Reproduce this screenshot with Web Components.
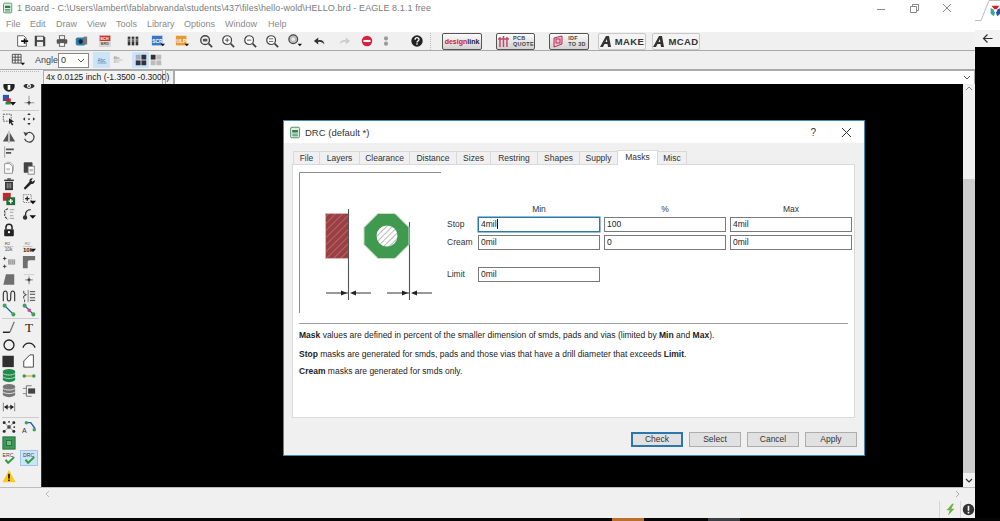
<!DOCTYPE html>
<html><head><meta charset="utf-8"><title>EAGLE DRC</title>
<style>
html,body{margin:0;height:521px;overflow:hidden;background:#000;font-family:"Liberation Sans",Arial,sans-serif}
</style></head><body>
<eagle-app></eagle-app>
<template id="none"></template>
<script>
const T=(x,y,s,t,f='#333',w=400)=>`<text x="${x}" y="${y}" font-size="${s}" fill="${f}" font-weight="${w}" font-family="Liberation Sans,sans-serif">${t}</text>`;
const DROP=`<path d="M11 11h5l-2.5 3z" fill="#111"/>`;
const ICONS={
open:`<path d="M3 2h7l3 3v9H3z" fill="#fff" stroke="#555"/><path d="M7 8h8M11 5v6" stroke="#111" stroke-width="2"/>`,
save:`<path d="M2 2h10l2 2v10H2z" fill="#444"/><rect x="4.500" y="3" width="7" height="4" fill="#eee"/><rect x="4.500" y="9" width="7" height="5" fill="#eee"/>`,
print:`<rect x="5" y="2" width="6" height="4" fill="#fff" stroke="#555"/><rect x="2" y="6" width="12" height="5" rx="1" fill="#555"/><rect x="5" y="10" width="6" height="4" fill="#fff" stroke="#555"/>`,
cam:`<rect x="2" y="4" width="11" height="9" rx="2" fill="#2c7ea8"/><circle cx="7.500" cy="8.500" r="2.500" fill="#123"/><rect x="11" y="3" width="4" height="9" fill="#777"/>`,
sch:`<rect x="2" y="1.500" width="12" height="13" fill="#dcdcdc" stroke="#bbb" stroke-width=".5"/><rect x="2" y="2" width="12" height="6" fill="#c33"/>${T(2.500,7,4.500,'SCH','#fff',700)}${T(3,13,4.500,'BRD','#555',700)}`,
libs:`<g fill="#333"><rect x="2" y="3" width="3" height="10"/><rect x="6.500" y="3" width="3" height="10"/><rect x="11" y="3" width="3" height="10"/></g><path d="M2 6h12M2 8h12" stroke="#ddd" stroke-width=".7"/>`,
scr:`<rect x="1" y="2" width="12" height="11" fill="#3a78c4"/>${T(1.500,10,5.500,'SCR','#fff',700)}${DROP}`,
ulp:`<rect x="1" y="2" width="12" height="11" fill="#ea9a2c"/>${T(1.800,10,5.500,'ULP','#fff',700)}${DROP}`,
zf:`<circle cx="7" cy="7" r="5" fill="#eee" stroke="#444" stroke-width="1.600"/><path d="M11 11l4 4" stroke="#444" stroke-width="2"/><rect x="4.500" y="5.500" width="5" height="3" fill="#555"/>`,
zp:`<circle cx="7" cy="7" r="5" fill="#fff" stroke="#444" stroke-width="1.400"/><path d="M11 11l4 4" stroke="#444" stroke-width="2"/><path d="M4.500 7h5M7 4.500v5" stroke="#444"/>`,
zm:`<circle cx="7" cy="7" r="5" fill="#fff" stroke="#444" stroke-width="1.400"/><path d="M11 11l4 4" stroke="#444" stroke-width="2"/><path d="M4.500 7h5" stroke="#444"/>`,
zs:`<circle cx="7" cy="7" r="5" fill="#fff" stroke="#444" stroke-width="1.400"/><path d="M11 11l4 4" stroke="#444" stroke-width="2"/><path d="M4.500 5.500h5M4.500 8.500h5" stroke="#555"/>`,
zl:`<circle cx="6" cy="6" r="5" fill="#bbb" stroke="#444" stroke-width="1.400"/><circle cx="6" cy="6" r="2" fill="#eee"/>${DROP}`,
undo:`<path d="M13 12c0-4-3-6-7-5V4L1 8l5 4V9c3-.5 5 .5 7 3z" fill="#333"/>`,
redo:`<path d="M3 12c0-4 3-6 7-5V4l5 4-5 4V9c-3-.5-5 .5-7 3z" fill="#ccc"/>`,
stop:`<circle cx="8" cy="8" r="6" fill="#d8203a"/><rect x="4" y="6.800" width="8" height="2.400" fill="#fff"/>`,
dots:`<circle cx="8" cy="5" r="2.300" fill="#999"/><circle cx="8" cy="11" r="2.300" fill="#999"/>`,
help:`<circle cx="8" cy="8" r="6.500" fill="#222"/><path d="M5.800 6.500c0-3 4.500-3 4.500-.2 0 1.700-2.300 1.700-2.300 3.300" fill="none" stroke="#fff" stroke-width="1.500"/><rect x="7.200" y="10.600" width="1.600" height="1.600" fill="#fff"/>`,
grid:`<path d="M1.500 1.500h10v10h-10zM1.500 4.800h10M1.500 8.100h10M4.800 1.500v10M8.100 1.500v10" fill="none" stroke="#444"/>${DROP}`,
abc:`${T(2,10,6,'Abc','#37a','400')}<path d="M2 12h12" stroke="#68a"/>`,
mirrorT:`<path d="M2 8h12" stroke="#999" stroke-width=".7"/>${T(2,7,5,'Abc','#888')}${T(2,12.500,5,'Abc','#bbb')}`,
gridA:`<g fill="#778"><rect x="2" y="2" width="5.500" height="5.500" fill="#aab"/><rect x="8.500" y="2" width="5.500" height="5.500" fill="#333"/><rect x="2" y="8.500" width="5.500" height="5.500" fill="#334"/><rect x="8.500" y="8.500" width="5.500" height="5.500" fill="#333"/></g>`,
gridB:`<rect x="2" y="2" width="5.500" height="5.500" fill="#333"/><rect x="8.500" y="2" width="5.500" height="5.500" fill="#bbb"/><rect x="2" y="8.500" width="5.500" height="5.500" fill="#bbb"/><rect x="8.500" y="8.500" width="5.500" height="5.500" fill="#bbb"/>`,
info:`<circle cx="8" cy="8" r="6.500" fill="#222"/><rect x="7" y="3.500" width="2" height="2" fill="#fff"/><rect x="6.500" y="6.800" width="3" height="5.500" fill="#fff"/>`,
eye:`<path d="M1.500 8C4 4 12 4 14.500 8 12 12 4 12 1.500 8z" fill="#333"/><circle cx="8" cy="8" r="2.300" fill="#fff"/><circle cx="8" cy="8" r="1" fill="#333"/>`,
layers:`<rect x="1" y="1" width="7" height="7" fill="#2a56b0"/><rect x="5" y="5" width="5" height="5" fill="#c22"/><rect x="4" y="9" width="6" height="3" fill="#285"/><path d="M9 9h7l-3.500 4z" fill="#111"/>`,
mark:`<path d="M8 2v11M3 10h11" stroke="#888"/><path d="M6 10h4M8 8v4" stroke="#222"/>`,
select:`<rect x="1.500" y="2.500" width="9" height="8" fill="none" stroke="#555" stroke-dasharray="2 1"/><path d="M8 7l6 4-3 .5 2 3-1.500.8-2-3-1.500 2z" fill="#222"/>`,
move:`<g fill="#333"><path d="M8 1l2 2.500H6zM8 15l2-2.500H6zM1 8l2.500-2v4zM15 8l-2.500-2v4z"/><circle cx="8" cy="8" r="1"/></g>`,
mirror:`<path d="M7 3v10L1 13zM9 3v10h6z" fill="#555"/><path d="M8 1v14" stroke="#999"/>`,
rotate:`<path d="M3.500 5.500A5.500 5.500 0 1 1 3 10" fill="none" stroke="#444" stroke-width="1.400"/><path d="M1.500 2l2.500 5 3-3z" fill="#444"/>`,
align:`<path d="M3 1.500v13" stroke="#999"/><rect x="4.500" y="4" width="9" height="2" fill="#555"/><rect x="4.500" y="8" width="6" height="2" fill="#555"/>`,
copy:`<path d="M3 3h6l3 3v8H3z" fill="#fff" stroke="#888"/><path d="M5 1.500h5l3 3v7" fill="none" stroke="#aaa"/><rect x="5" y="8" width="4" height="3" fill="#ccc"/>`,
paste:`<rect x="2" y="1.500" width="10" height="12" rx="1" fill="#444"/><rect x="7" y="6" width="7" height="9" fill="#fff" stroke="#777"/><rect x="8.500" y="9" width="4" height="3" fill="#bbb"/>`,
trash:`<rect x="2.500" y="3" width="11" height="1.600" fill="#333"/><rect x="6" y="1.500" width="4" height="1.500" fill="#333"/><path d="M3.500 5.500h9V15h-9z" fill="#333"/><path d="M6 7v6M8 7v6M10 7v6" stroke="#ccc" stroke-width=".8"/>`,
wrench:`<path d="M14.500 3.500l-2.500 2-1.500-1.500 2-2.500C10 .8 8 2.500 8.500 5.500L2 12.500 3.500 14.500l7-6.500c3 .5 4.500-2 4-4.500z" fill="#222"/>`,
change:`<rect x="1" y="1" width="9" height="9" fill="#c1272d"/><rect x="5" y="6" width="10" height="9" fill="#25693c"/><path d="M10 8v5M7.500 10.500h5" stroke="#fff" stroke-width="1.500"/>`,
group:`<rect x="1.500" y="3" width="9" height="9" fill="none" stroke="#777" stroke-dasharray="1.500 1"/><path d="M6 5v5M3.500 7.500h5" stroke="#222" stroke-width="1.500"/><path d="M9 10h7l-3.500 4z" fill="#111"/>`,
split:`<path d="M7 2C3 3 2 5 4 7c-2 2-1 5 3 7" fill="none" stroke="#333" stroke-width="1.200" stroke-dasharray="3 1"/><path d="M9 3h5M9 6h4M9 10h4M9 13h5" stroke="#999"/>`,
miterdrop:`<path d="M4 14V9c0-3 2-6 6-6" fill="none" stroke="#333" stroke-width="1.600"/><circle cx="3.500" cy="12" r="2.500" fill="#333"/><path d="M8.500 9.500h7.500l-3.700 4z" fill="#111"/>`,
lock:`<path d="M4.500 7V5a3.500 3.500 0 0 1 7 0v2" fill="none" stroke="#222" stroke-width="1.700"/><rect x="2.500" y="7" width="11" height="8" rx="1" fill="#222"/><circle cx="8" cy="10.500" r="1.300" fill="#fff"/>`,
r10:`${T(3,6,5,'R2','#555')}<path d="M2 7.500h11" stroke="#999" stroke-width=".6"/>${T(3,13,5.500,'10k','#555')}`,
r10d:`${T(3,6,5,'R2','#888')}<path d="M1 7.500h11" stroke="#999" stroke-width=".6"/>${T(1,14,7,'10k','#222',700)}<path d="M10 10h6l-3 3.500z" fill="#111"/>`,
smash:`<path d="M3 2v4M1 4h4M3 11v4M1 13h4" stroke="#333"/><rect x="7" y="5" width="8" height="6" fill="#999"/><path d="M9 5v6M11 5v6M13 5v6" stroke="#ddd" stroke-width=".6"/>`,
miter:`<path d="M1 15V1h14v5H9c-1.500 0-2.500 1-2.500 2.500V15z" fill="#6f6f6f"/>`,
poly2:`<path d="M1.500 14.500l3-12h9.500v12z" fill="#6f6f6f"/>`,
pin:`<path d="M8 5v9M3.500 9h9" stroke="#777"/><path d="M6 9h4M8 7v4" stroke="#222"/><path d="M2 3h12" stroke="#ccc"/>`,
meander:`<path d="M1.500 14V6c0-5 4.500-5 4.500 0v4c0 5 4 5 4 0V6c0-5 4.500-5 4.500 0v8" fill="none" stroke="#333" stroke-width="1.300"/>`,
spread:`<path d="M2 2v3l3 1.500L2 8v3M3 12v3" fill="none" stroke="#333"/><path d="M9 3h6M9 6h6M9 10h6M9 13h6" stroke="#333"/><path d="M7 1v14" stroke="#777"/>`,
route:`<path d="M3 3l10 10" stroke="#1e62a8" stroke-width="1.600"/><circle cx="3" cy="3" r="2.300" fill="#41a05c"/><circle cx="13" cy="13" r="2.300" fill="#41a05c"/>`,
route2:`<path d="M3 3l10 10" stroke="#1e62a8" stroke-width="1.600"/><circle cx="3" cy="3" r="2.300" fill="#41a05c"/><circle cx="13" cy="13" r="2.300" fill="#41a05c"/><rect x="6.500" y="6.500" width="3.500" height="3.500" fill="#d33c8a"/>`,
line:`<path d="M1 14h8" stroke="#111" stroke-width="1.500"/><path d="M9 14l5-12" stroke="#777" stroke-width="1.500"/>`,
text:`<text x="8" y="14" font-size="15" fill="#222" text-anchor="middle" font-family="Liberation Serif,serif">T</text>`,
circle:`<circle cx="8" cy="8" r="5.700" fill="none" stroke="#222" stroke-width="1.500"/>`,
arc:`<path d="M1 11C4 4 12 4 15 11" fill="none" stroke="#222" stroke-width="1.500"/>`,
rect:`<rect x="0.500" y="2" width="13" height="13" fill="#2f2f2f"/>`,
poly:`<path d="M2 15V8l7-7h4v14z" fill="#fff" stroke="#333"/>`,
gstack:`<g fill="#228a4a"><ellipse cx="8" cy="12" rx="7" ry="3"/><rect x="1" y="3" width="14" height="9"/><ellipse cx="8" cy="3" rx="7" ry="3"/></g><path d="M1 5c3 2.500 11 2.500 14 0M1 9c3 2.500 11 2.500 14 0" fill="none" stroke="#bfe6cb" stroke-width="1"/>`,
air:`<path d="M2 8h12" stroke="#d4b11f" stroke-width="1.400"/><circle cx="2.500" cy="8" r="2" fill="#3c9a54"/><circle cx="13.500" cy="8" r="2" fill="#3c9a54"/>`,
stack:`<g fill="#777"><ellipse cx="8" cy="12" rx="7" ry="3"/><rect x="1" y="3" width="14" height="9"/><ellipse cx="8" cy="3" rx="7" ry="3"/></g><path d="M1 5c3 2.500 11 2.500 14 0M1 9c3 2.500 11 2.500 14 0" fill="none" stroke="#eee" stroke-width="1"/>`,
part:`<path d="M5 2v12M5 2h6M5 14h6" stroke="#666" fill="none"/><path d="M1 5h4M1 11h4" stroke="#777"/><rect x="7" y="5" width="8" height="6" fill="#444"/>`,
dim:`<path d="M1.500 3v10M14.500 3v10" stroke="#777"/><path d="M3 8h10" stroke="#222"/><path d="M2.500 8l4-3v6zM13.500 8l-4-3v6z" fill="#222"/>`,
rats:`<g fill="#222"><circle cx="8" cy="8" r="2"/><circle cx="2.500" cy="3" r="1.700"/><circle cx="13.500" cy="3" r="1.700"/><circle cx="2.500" cy="13" r="1.700"/><circle cx="13.500" cy="13" r="1.700"/><circle cx="8" cy="2" r="1"/><circle cx="14" cy="8" r="1"/></g><path d="M2.500 3L13.500 13M13.500 3L2.500 13" stroke="#666" stroke-width=".7"/>`,
auto:`${T(0,15,8,'A','#333')}<path d="M6 3l4 0 5 7" fill="none" stroke="#1e62a8" stroke-width="1.600"/><circle cx="5" cy="3" r="2" fill="#41a05c"/><circle cx="14" cy="11" r="2" fill="#41a05c"/>`,
board:`<rect x="1" y="1" width="14" height="14" fill="#3c9a54" stroke="#1f6b38"/><rect x="5" y="5" width="6" height="6" fill="#7cb98f" stroke="#1f6b38"/>`,
erc:`${T(.5,6.500,6,'ERC','#444')}<path d="M4 10l3 3.500L14 7" fill="none" stroke="#2e9a45" stroke-width="2.200"/>`,
drc:`${T(1,6.500,6,'DRC','#444')}<path d="M4 10l3 3.500L14 7" fill="none" stroke="#2e9a45" stroke-width="2.200"/>`,
warn:`<path d="M8 1L15.500 15H.5z" fill="#fbc81c"/><rect x="7" y="5.500" width="2" height="5.500" fill="#222"/><rect x="7" y="12" width="2" height="1.800" fill="#222"/>`,
bolt:`<path d="M10 1L3 9h4l-2 6 8-8H9l3-6z" fill="#6cb33f"/>`,
alert:`<circle cx="8" cy="8" r="7" fill="#333"/><rect x="7" y="3.500" width="2" height="6" fill="#fff"/><rect x="7" y="10.800" width="2" height="2" fill="#fff"/>`,
appicon:`<rect x="2" y="1.500" width="11" height="13" rx="1.500" fill="#dfeee3" stroke="#2f7d4a"/><rect x="4" y="5" width="7" height="3" fill="#2f7d4a"/><path d="M4 10h7M4 12h7" stroke="#2f7d4a"/>`,
fav:`<circle cx="8" cy="8" r="7" fill="#fff"/><path d="M8 8L3 2h10z" fill="#c22"/><path d="M8 8L2 5v7l4 3z" fill="#3a9"/><path d="M8 8l6-3v7l-4 3z" fill="#25a"/><circle cx="8" cy="8" r="2" fill="#fff"/>`
};
class EIcon extends HTMLElement{
  connectedCallback(){
    const s=+(this.getAttribute('size')||14);
    const r=this.attachShadow({mode:'open'});
    r.innerHTML=`<style>:host{display:inline-flex;width:${s}px;height:${s}px;flex:none}svg{display:block}</style><svg width="${s}" height="${s}" viewBox="0 0 16 16">${ICONS[this.getAttribute('name')]||''}</svg>`;
  }
}
customElements.define('e-icon',EIcon);

class TitleBar extends HTMLElement{
  constructor(){super();this.attachShadow({mode:'open'}).innerHTML=`<style>
  :host{display:flex;align-items:center;height:16px;background:#fff;color:#7b7b7b;font-size:9px;padding-left:2px;white-space:nowrap}
  span{margin-left:3px;letter-spacing:.01em}
  .c{margin-left:auto;display:flex;padding-right:11px;gap:0}
  .c svg{display:block;width:33px;height:12px}
  </style><e-icon name="appicon" size="12"></e-icon><span>1 Board - C:\\Users\\lambert\\fablabrwanda\\students\\437\\files\\hello-wold\\HELLO.brd - EAGLE 8.1.1 free</span>
  <div class="c">
  <svg viewBox="0 0 33 12"><path d="M12 7.500h8" stroke="#888"/></svg>
  <svg viewBox="0 0 33 12"><path d="M12.500 4.500h6v6h-6zM14.500 4.500v-2h6v6h-2" fill="none" stroke="#888"/></svg>
  <svg viewBox="0 0 33 12"><path d="M12 2l8 8M20 2l-8 8" stroke="#888"/></svg>
  </div>`}
}
customElements.define('title-bar',TitleBar);

class MenuBar extends HTMLElement{
  constructor(){super();const items=[['File',6],['Edit',30],['Draw',56],['View',87],['Tools',116],['Library',147],['Options',184],['Window',225],['Help',268]];
  this.attachShadow({mode:'open'}).innerHTML=`<style>:host{display:flex;height:16px;align-items:center;background:#fff;color:#8a8a8a;font-size:9px;padding-bottom:0}
  span{display:block;flex:none}</style>`+items.map((m,i)=>`<span style="width:${(items[i+1]?items[i+1][1]:330)-m[1]}px;${i==0?'margin-left:6px':''}">${m[0]}</span>`).join('')}
}
customElements.define('menu-bar',MenuBar);

/* toolbar: [centerX, icon] list is turned into flow with margins */
class MainTool extends HTMLElement{
  constructor(){super();
  const list=[[22,'open'],[40,'save'],[62,'print'],[81,'cam'],[105,'sch'],[133,'libs'],[158,'scr'],[182,'ulp'],[206,'zf'],[228,'zp'],[250,'zm'],[272,'zs'],[295,'zl'],[320,'undo'],[344,'redo'],[367,'stop'],[386,'dots'],[417,'help']];
  let html='',x=0;
  for(const[c,n]of list){const l=c-7-x;html+=`<e-icon name="${n}" style="margin-left:${l}px"></e-icon>`;x=c+7;}
  const seps=[];
  this.attachShadow({mode:'open'}).innerHTML=`<style>
  :host{display:flex;align-items:center;height:19px;background:#f0f0f0;border-bottom:1px solid #a9a9a9;font-size:7px;position:relative}
  .sep{height:17px;border-left:1px dotted #bbb;margin-left:5px}
  .b{box-sizing:border-box;height:17px;display:flex;align-items:center;justify-content:center;flex:none;border:1px solid #555;border-radius:2px;background:linear-gradient(#fafafa,#d2d2d2);color:#333;gap:3px}
  .t{display:block;line-height:6.500px;font-size:5.500px;font-weight:700;letter-spacing:.3px;color:#444}
  .m{border:1px solid #c8c8c8;background:#f4f4f4;font-size:9.500px;font-weight:700;color:#333;letter-spacing:.4px;height:17px;gap:4px}
  .dl{color:#c22;font-size:7px;font-weight:700}
  .dl i{font-style:normal;color:#222}
  </style>${html}
  <div class="sep" style="margin-left:6px"></div>
  <div class="b" style="width:40px;margin-left:11px"><span class="dl">design<i>link</i></span></div>
  <div class="b" style="width:39px;margin-left:14px"><svg width="13" height="13" viewBox="0 0 13 13"><path d="M1 4h11M3 2v10M6.500 1v11M10 2v10" stroke="#c2476c" stroke-width="1.500" fill="none"/></svg><span class="t">PCB<br>QUOTE</span></div>
  <div class="b" style="width:40px;margin-left:14px"><svg width="13" height="13" viewBox="0 0 13 13"><path d="M2 3l8-2v8l-8 3z" fill="#f4c6d2" stroke="#b03058"/><rect x="4" y="4" width="4" height="4" fill="none" stroke="#b03058"/></svg><span class="t">IDF<br>TO 3D</span></div>
  <div class="b m" style="width:48px;margin-left:9px"><svg width="11" height="11" viewBox="0 0 11 11"><path d="M0 11L6 0h3l2 11H8L7.500 8H4.500L3 11zM5.500 6H7.300L6.800 3z" fill="#333"/></svg>MAKE</div>
  <div class="b m" style="width:48px;margin-left:6px"><svg width="11" height="11" viewBox="0 0 11 11"><path d="M0 11L6 0h3l2 11H8L7.500 8H4.500L3 11zM5.500 6H7.300L6.800 3z" fill="#333"/></svg>MCAD</div>`}
}
customElements.define('main-tool',MainTool);

class ParamTool extends HTMLElement{
  constructor(){super();this.attachShadow({mode:'open'}).innerHTML=`<style>
  :host{display:flex;align-items:center;height:18px;background:#f0f0f0;border-bottom:1px solid #a9a9a9;font-size:9px;color:#444}
  .sel{box-sizing:border-box;width:31px;height:15px;background:#fff;border:1px solid #888;display:flex;align-items:center;justify-content:space-between;padding:0 3px 0 2px;color:#333;flex:none}
  .hl{display:flex;align-items:center;justify-content:center;width:17px;height:16px;background:#cce4f7;flex:none}
  </style>
  <e-icon name="grid" style="margin-left:11px"></e-icon>
  <span style="margin-left:10px;width:23px">Angle:</span>
  <div class="sel">0<svg width="8" height="5"><path d="M1 1l3 3 3-3" stroke="#555" fill="none"/></svg></div>
  <div class="hl" style="margin-left:4px"><e-icon name="abc" size="12"></e-icon></div>
  <e-icon name="mirrorT" size="12" style="margin-left:2px"></e-icon>
  <div class="hl" style="margin-left:8px"><e-icon name="gridA" size="14"></e-icon></div>
  <e-icon name="gridB" size="14" style="margin-left:0"></e-icon>`}
}
customElements.define('param-tool',ParamTool);

class CoordBar extends HTMLElement{
  constructor(){super();this.attachShadow({mode:'open'}).innerHTML=`<style>
  :host{display:flex;align-items:stretch;height:14px;background:#f0f0f0;font-size:8.500px;color:#222;white-space:nowrap}
  .g{width:39px;margin:1px 4px 0 0;flex:none;border-top:1px dotted #bbb}
  .b{box-sizing:border-box;width:120px;border:1px solid #aaa;border-bottom:0;padding-left:2px;line-height:12px;background:#f4f4f4;flex:none}
  .k{box-sizing:border-box;width:9px;margin-left:2px;border:1px solid #aaa;border-bottom:0;flex:none}
  .i{flex:1;box-sizing:border-box;background:#fff;border:1px solid #aaa;border-bottom:0;display:flex;align-items:center;justify-content:flex-end;padding-right:3px}
  </style><div class="g"></div><div class="b">4x 0.0125 inch (-1.3500 -0.3000)</div><div class="k"></div>
  <div class="i"><svg width="8" height="5"><path d="M1 1l3 3 3-3" stroke="#555" fill="none"/></svg></div>`}
}
customElements.define('coord-bar',CoordBar);

class SideTool extends HTMLElement{
  constructor(){super();
  const rows=[[86,'info','eye'],[101,'layers','mark'],['s',110],[119,'select','move'],[137,'mirror','rotate'],[152,'align',''],[168,'copy','paste'],[184,'trash','wrench'],[199,'change','group'],[214,'split','miterdrop'],[230,'lock',''],[247,'r10','r10d'],[262,'smash','miter'],[279,'poly2','pin'],[296,'meander','spread'],[310,'route','route2'],['s',318],[327,'line','text'],[345,'circle','arc'],[361,'rect','poly'],[376,'gstack','air'],[391,'stack','part'],[407,'dim',''],['s',417],[427,'rats','auto'],[443,'board',''],[458,'erc','drc'],[476,'warn','']];
  let y=84,h='';
  for(const r of rows){
    if(r[0]==='s'){h+=`<div class="sp" style="margin-top:${r[1]-y}px"></div>`;y=r[1]+1;continue;}
    const m=r[0]-7-y;
    const drc=r[2]==='drc';
    h+=`<div class="r" style="margin-top:${m}px"><div class="c">${r[1]?`<e-icon name="${r[1]}"></e-icon>`:''}</div><div class="c ${drc?'on':''}">${r[2]?`<e-icon name="${r[2]}"></e-icon>`:''}</div></div>`;
    y=r[0]+7;
  }
  this.attachShadow({mode:'open'}).innerHTML=`<style>
  :host{display:block;width:41px;background:#f0f0f0;flex:none;overflow:hidden}
  .r{display:flex;height:14px;padding-left:2px}
  .c{width:14px;height:14px;margin-right:6px;position:relative}
  .c.on::before{content:"";position:absolute;inset:-1px -2px;background:#cce4f7;border:1px solid #9cc7ea}
  .c e-icon{position:relative}
  .sp{height:1px;background:#ccc;margin:0 2px 0 2px}
  </style>${h}`}
}
customElements.define('side-tool',SideTool);

class DrcField extends HTMLElement{
  constructor(){super();const r=this.attachShadow({mode:'open'});r.innerHTML=`<style>
  :host{display:block;box-sizing:border-box;height:15px;border:1px solid #7a7a7a;background:#fff;padding-left:2px;font-size:8.500px;line-height:13px;color:#222}
  :host([focus]){border:1px solid #2a7aa8;box-shadow:0 0 0 .5px #2a7aa8}
  i{display:inline-block;width:1px;height:10px;background:#111;vertical-align:-2px}
  </style><slot></slot>`;
  if(this.hasAttribute('focus'))r.innerHTML+='<i></i>';}
}
customElements.define('drc-field',DrcField);

class MaskFigure extends HTMLElement{
  constructor(){super();this.attachShadow({mode:'open'}).innerHTML=`<style>:host{display:block;width:143px;height:142px;flex:none}svg{display:block}</style>
  <svg width="143" height="142" viewBox="0 0 143 142">
  <defs><pattern id="h" width="5" height="5" patternUnits="userSpaceOnUse" patternTransform="rotate(-45)"><rect width="5" height="5" fill="#9c3f44"/><rect width="5" height="1" fill="#b3666a"/></pattern>
  <pattern id="w" width="4" height="4" patternUnits="userSpaceOnUse" patternTransform="rotate(-45)"><rect width="4" height="4" fill="#fff"/><rect width="4" height="1" fill="#bbb"/></pattern></defs>
  <path d="M142 .5H.5V141" fill="none" stroke="#8d8d8d"/>
  <rect x="26.500" y="41.500" width="23" height="45" fill="url(#h)" stroke="#dbb8b8"/>
  <path d="M49.500 37v91M110.500 50v78" stroke="#555" stroke-width="1.100"/>
  <path d="M79 41.500h17l14 14v17l-14 14H79l-14-14v-17z" fill="#3f9a4f" stroke="#c5dfc9"/>
  <circle cx="88" cy="64" r="10.500" fill="url(#w)"/>
  <path d="M27 121h22M56 121h16M88 121h22M117 121h16" stroke="#333"/>
  <path d="M42 118.500l6 2.500-6 2.500zM57 118.500l-6 2.500 6 2.500zM103 118.500l6 2.500-6 2.500zM118 118.500l-6 2.500 6 2.500z" fill="#222"/>
  </svg>`}
}
customElements.define('mask-figure',MaskFigure);

class DrcDialog extends HTMLElement{
  constructor(){super();
  const tabs=[['File',27],['Layers',40],['Clearance',50],['Distance',47],['Sizes',34],['Restring',47],['Shapes',42],['Supply',38],['Masks',40,1],['Misc',29]];
  this.attachShadow({mode:'open'}).innerHTML=`<style>
  :host{position:absolute;left:283px;top:120px;width:582px;height:336px;box-sizing:border-box;border:1px solid #3a8fb0;background:#f0f0f0;font-size:8.500px;color:#222;display:flex;flex-direction:column}
  .head{height:22px;background:#fff;display:flex;align-items:center;padding-left:5px;font-size:9.500px;color:#333;flex:none}
  .head span{margin-left:3px}
  .head .q{margin-left:auto;margin-right:25px;font-size:10px;font-weight:400}
  .head svg{margin-right:12px}
  .tabs{display:flex;align-items:flex-end;height:21px;padding-left:9px;flex:none;margin-bottom:0;position:relative;z-index:1}
  .tab{box-sizing:border-box;height:13px;border:1px solid #d9d9d9;border-left:0;border-bottom:0;text-align:center;line-height:13px;background:#f0f0f0;flex:none;color:#333}
  .tab:first-child{border-left:1px solid #d9d9d9}
  .tab.on{height:15px;background:#fff;line-height:13px;margin-left:-1px;border-left:1px solid #d9d9d9;margin-bottom:-1px}
  .pane{box-sizing:border-box;width:563px;height:254px;margin-left:8px;background:#fff;border:1px solid #d9d9d9;padding:7px 6px 0 6px;flex:none}
  .top{display:flex;height:151px}
  .form{margin-left:5px;flex:1;display:grid;grid-template-columns:27px 122px 122px 122px;column-gap:4px;grid-template-rows:auto;align-content:start;padding-top:31px;font-size:8.500px}
  .h{text-align:center;height:14px;line-height:13px;color:#333}
  .l{line-height:15px;color:#333}
  .hr{height:1px;background:#a0a0a0;width:549px}
  .p{margin:5px 0 0;line-height:12px;color:#222;white-space:nowrap}
  .p+.p{margin-top:7px}
  .btns{display:flex;justify-content:flex-end;padding:14px 7px 0 0;gap:6px}
  .btn{box-sizing:border-box;width:52px;height:15px;background:#e1e1e1;border:1px solid #adadad;text-align:center;line-height:13px;color:#333}
  .btn.d{border:2px solid #2b76ad;line-height:11px}
  </style>
  <div class="head"><e-icon name="appicon" size="13"></e-icon><span>DRC (default *)</span><span class="q">?</span>
  <svg width="11" height="11" viewBox="0 0 11 11"><path d="M1 1l9 9M10 1l-9 9" stroke="#333"/></svg></div>
  <div class="tabs">${tabs.map(t=>`<div class="tab ${t[2]?'on':''}" style="width:${t[1]+(t[2]?1:0)}px">${t[0]}</div>`).join('')}</div>
  <div class="pane">
    <div class="top"><mask-figure></mask-figure>
      <div class="form">
        <div></div><div class="h">Min</div><div class="h">%</div><div class="h">Max</div>
        <div class="l">Stop</div><drc-field focus>4mil</drc-field><drc-field>100</drc-field><drc-field>4mil</drc-field>
        <div class="l" style="margin-top:3px">Cream</div><drc-field style="margin-top:3px">0mil</drc-field><drc-field style="margin-top:3px">0</drc-field><drc-field style="margin-top:3px">0mil</drc-field>
        <div class="l" style="margin-top:17px">Limit</div><drc-field style="margin-top:17px">0mil</drc-field>
      </div>
    </div>
    <div class="hr"></div>
    <p class="p"><b>Mask</b> values are defined in percent of the smaller dimension of smds, pads and vias (limited by <b>Min</b> and <b>Max</b>).</p>
    <p class="p"><b>Stop</b> masks are generated for smds, pads and those vias that have a drill diameter that exceeds <b>Limit</b>.</p>
    <p class="p" style="margin-top:5px"><b>Cream</b> masks are generated for smds only.</p>
  </div>
  <div class="btns"><div class="btn d">Check</div><div class="btn">Select</div><div class="btn">Cancel</div><div class="btn">Apply</div></div>`}
}
customElements.define('drc-dialog',DrcDialog);

class StatusArea extends HTMLElement{
  constructor(){super();this.attachShadow({mode:'open'}).innerHTML=`<style>
  :host{display:block;height:31px;background:#f0f0f0;border-top:1px solid #bdbdbd;box-sizing:border-box;flex:none}
  .h{height:12px;display:flex;justify-content:space-between;align-items:center;padding:0 14px 0 44px}
  .s{height:18px;display:flex;justify-content:flex-end;align-items:center}
  .s e-icon{margin-right:2px}
  .v{width:1px;height:17px;background:#d6d6d6;margin-right:4px}
  </style>
  <div class="h"><svg width="6" height="8"><path d="M5 1L2 4l3 3" stroke="#bbb" fill="none"/></svg><svg width="6" height="8"><path d="M1 1l3 3-3 3" stroke="#aaa" fill="none"/></svg></div>
  <div class="s"><div class="v"></div><e-icon name="bolt" size="13" style="margin-right:3px"></e-icon><div class="v" style="margin-right:1px"></div><e-icon name="alert" size="13" style="margin-right:0"></e-icon></div>`}
}
customElements.define('status-area',StatusArea);

class BrowserStrip extends HTMLElement{
  constructor(){super();this.attachShadow({mode:'open'}).innerHTML=`<style>
  :host{display:block;width:25px;flex:none;background:#000}
  .t{height:30px;background:#fff;position:relative;display:block}
  .a{height:17px;background:#f2f2f2;display:flex;align-items:center;padding-left:7px}
  svg{display:block}
  </style>
  <div class="t"><svg width="25" height="30"><path d="M0 20.500h6L14 .500h11" fill="none" stroke="#bbb"/></svg><e-icon name="fav" size="13" style="position:absolute;left:14px;top:4px"></e-icon></div>
  <div class="a"><svg width="11" height="11" viewBox="0 0 11 11"><path d="M10.500 5.500H1.500M5.500 1.500l-4 4 4 4" fill="none" stroke="#333" stroke-width="1.200"/></svg></div>`}
}
customElements.define('browser-strip',BrowserStrip);

class TaskStrip extends HTMLElement{
  constructor(){super();this.attachShadow({mode:'open'}).innerHTML=`<style>
  :host{display:flex;height:3px;background:#050505;flex:none}
  .o{width:32px;margin-left:612px;background:#b8702c}.g{width:32px;margin-left:64px;background:#3a3f45}
  </style><div class="o"></div><div class="g"></div>`}
}
customElements.define('task-strip',TaskStrip);

class EagleApp extends HTMLElement{
  constructor(){super();this.attachShadow({mode:'open'}).innerHTML=`<style>
  :host{display:flex;flex-direction:column;width:1000px;height:521px;position:relative;background:#000;font-family:"Liberation Sans",Arial,sans-serif;overflow:hidden}
  .main{display:flex;height:518px;flex:none}
  .win{width:975px;height:518px;display:flex;flex-direction:column;flex:none}
  .work{display:flex;height:403px;flex:none}
  .canvas{flex:1;background:#000;border-left:1px solid #333}
  .vs{width:12px;background:#f0f0f0;display:flex;flex-direction:column;flex:none;padding-left:0}
  .up{height:9px;display:flex;align-items:center;justify-content:center}
  .tr{height:86px;background:#f0f0f0}
  .th{height:294px;background:#cdcdcd}
  .dn{height:14px;display:flex;align-items:center;justify-content:center}
  </style>
  <div class="main"><div class="win">
  <title-bar></title-bar><menu-bar></menu-bar><main-tool></main-tool><param-tool></param-tool><coord-bar></coord-bar>
  <div class="work"><side-tool></side-tool><div class="canvas"></div>
    <div class="vs"><div class="up"><svg width="8" height="5"><path d="M1 4l3-3 3 3" stroke="#888" fill="none"/></svg></div><div class="tr"></div><div class="th"></div><div class="dn"><svg width="8" height="5"><path d="M1 1l3 3 3-3" stroke="#333" stroke-width="1.200" fill="none"/></svg></div></div>
  </div>
  <status-area></status-area>
  </div><browser-strip></browser-strip></div>
  <task-strip></task-strip>
  <drc-dialog></drc-dialog>`}
}
customElements.define('eagle-app',EagleApp);
</script>
</body></html>
